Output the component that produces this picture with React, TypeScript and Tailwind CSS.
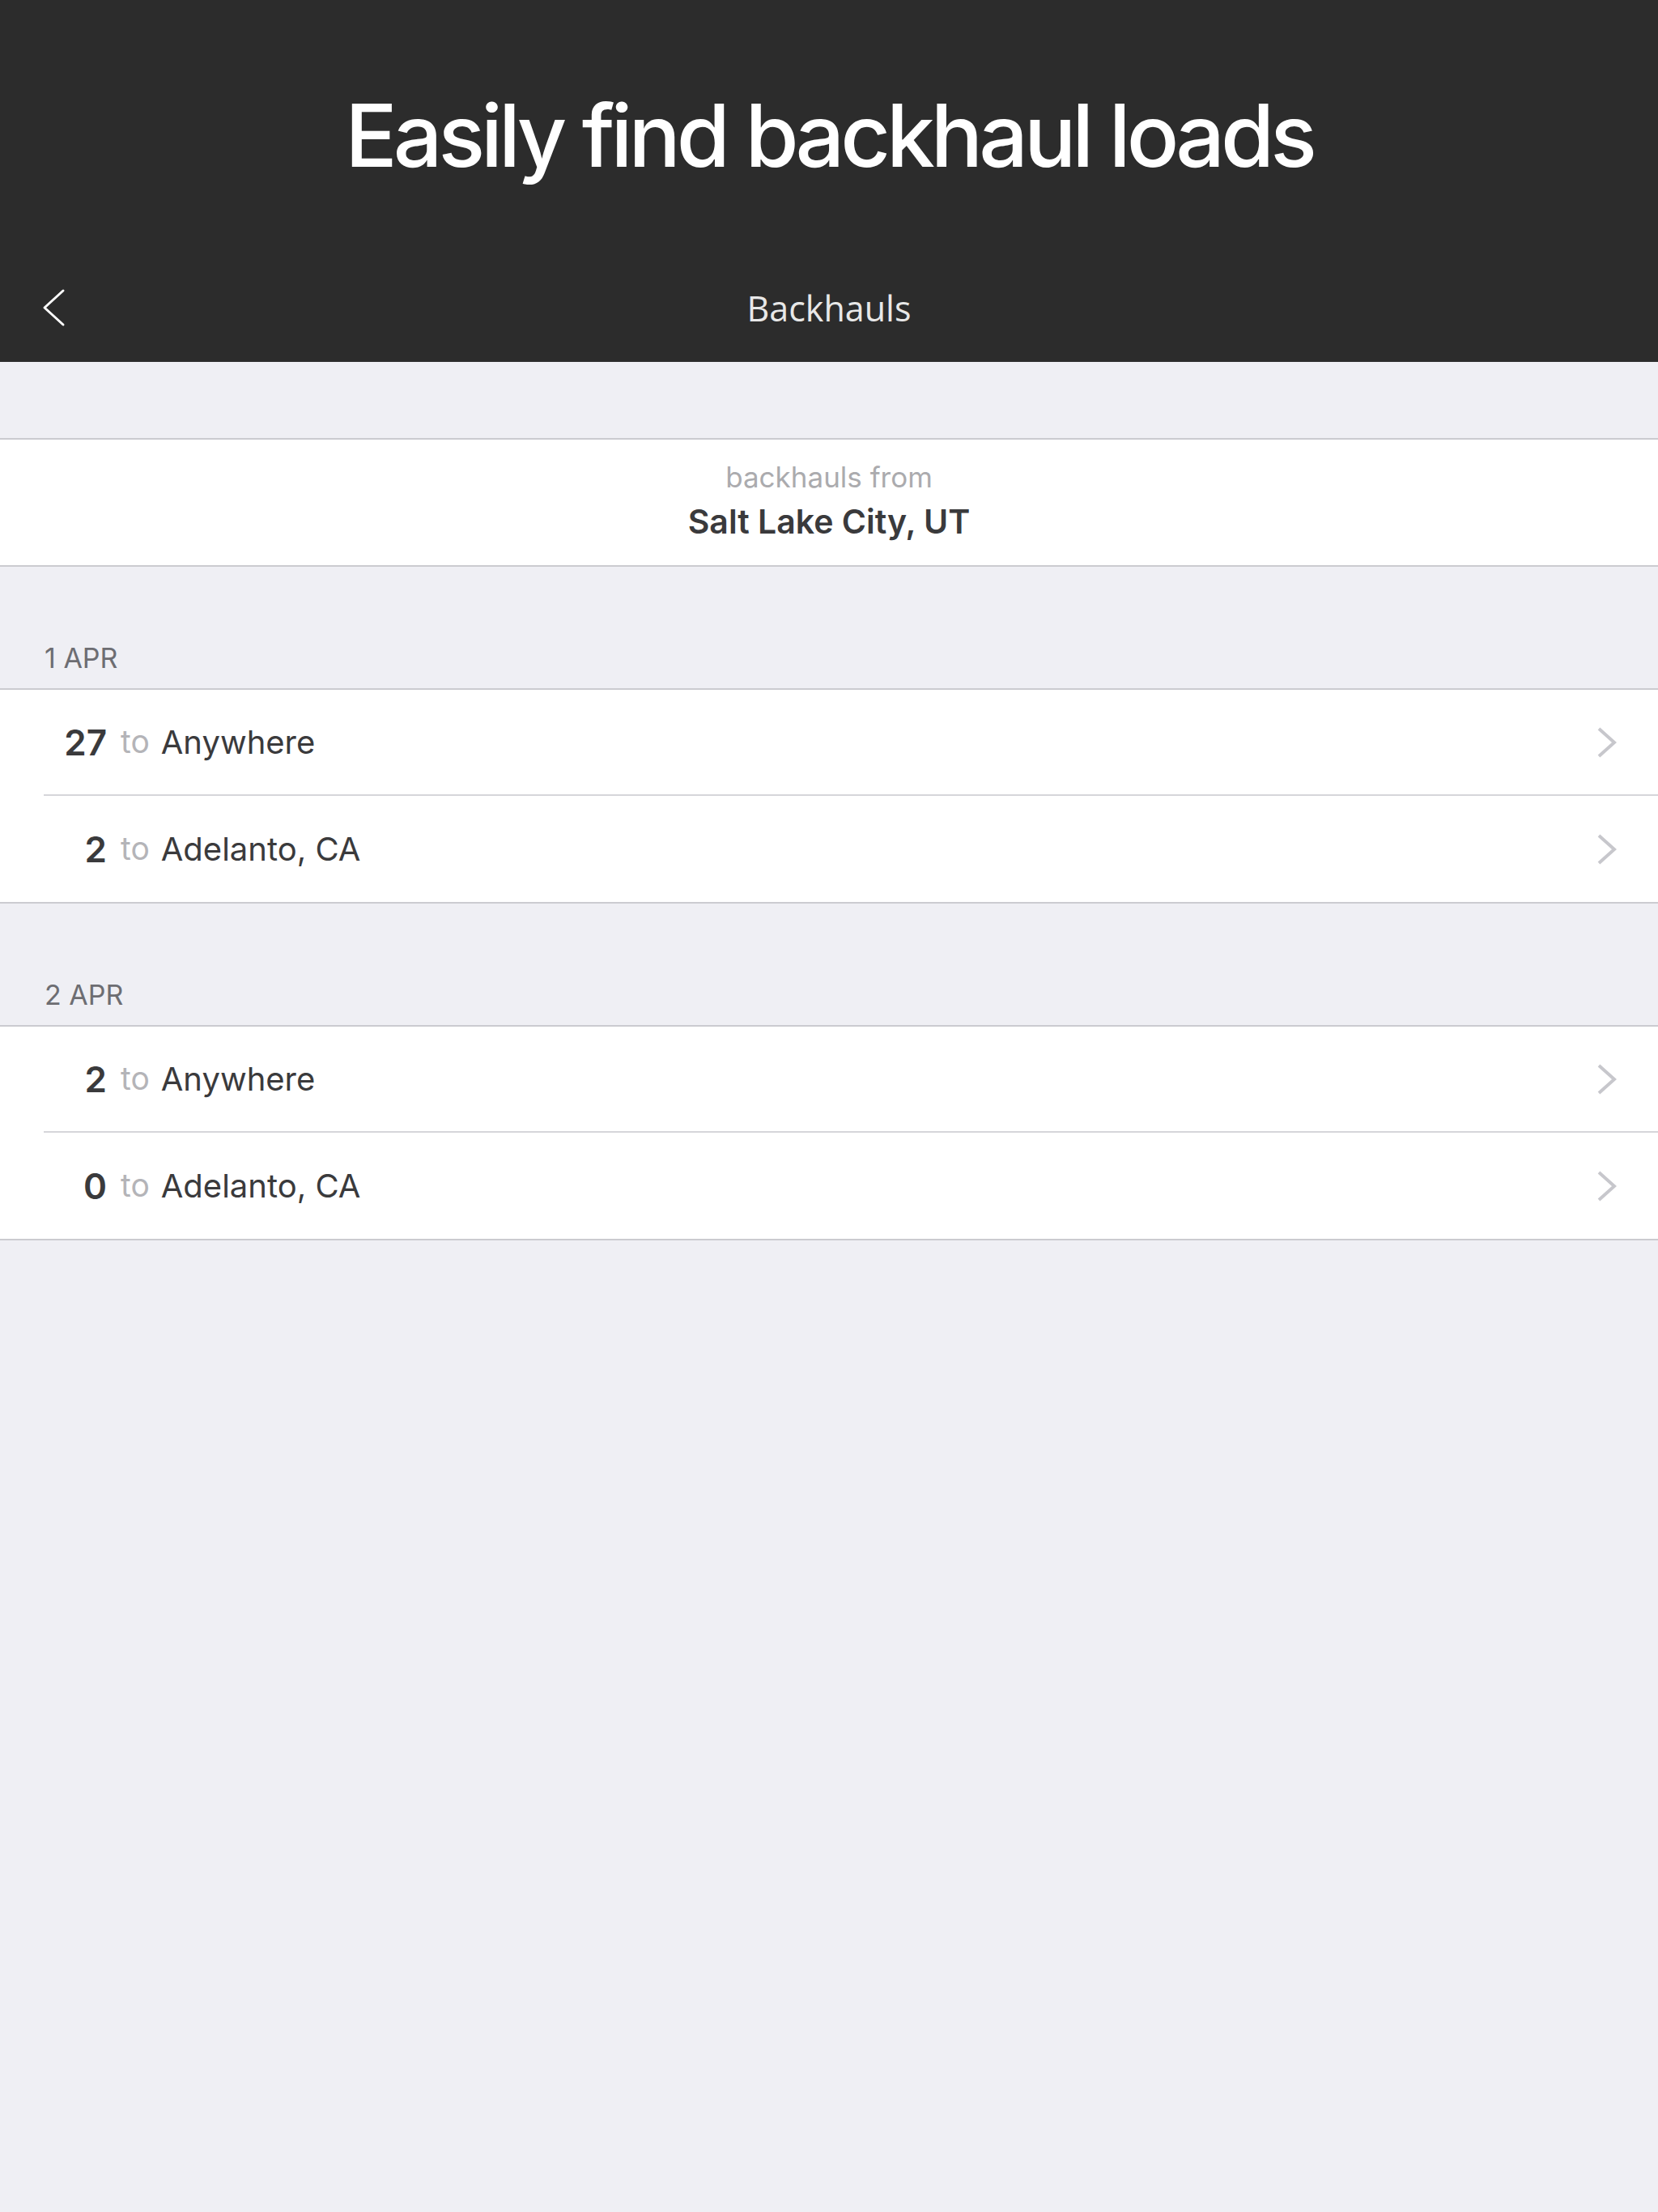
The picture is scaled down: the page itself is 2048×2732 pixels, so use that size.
import React from "react";

type Row = { count: number; dest: string };
type Section = { date: string; rows: Row[] };

const sections: Section[] = [
  {
    date: "1 APR",
    rows: [
      { count: 27, dest: "Anywhere" },
      { count: 2, dest: "Adelanto, CA" },
    ],
  },
  {
    date: "2 APR",
    rows: [
      { count: 2, dest: "Anywhere" },
      { count: 0, dest: "Adelanto, CA" },
    ],
  },
];

function ChevronRight() {
  return (
    <svg width="26" height="40" viewBox="0 0 26 40" fill="none">
      <polyline
        points="3,3 22,20 3,37"
        stroke="#c7c7cc"
        strokeWidth="4"
        strokeLinecap="butt"
        strokeLinejoin="miter"
      />
    </svg>
  );
}

function BackChevron() {
  return (
    <svg width="30" height="48" viewBox="0 0 30 48" fill="none">
      <polyline
        points="26,3 3,24 26,45"
        stroke="#ffffff"
        strokeWidth="3"
        strokeLinecap="round"
        strokeLinejoin="round"
      />
    </svg>
  );
}

function ListRow({ row, last }: { row: Row; last: boolean }) {
  return (
    <div className="flex h-[131px] items-stretch pl-[54px]">
      <div
        className={
          "flex flex-1 items-center pr-[50px] " +
          (last ? "" : "border-b-2 border-[#d6d6da]")
        }
      >
        <span className="w-[78px] text-right text-[44px] font-semibold text-[#3a3a3c]">
          {row.count}
        </span>
        <span className="ml-[17px] text-[39px] text-[#b4b4b8]">to</span>
        <span className="ml-[14px] text-[40px] text-[#3a3a3c]">{row.dest}</span>
        <span className="flex-1" />
        <ChevronRight />
      </div>
    </div>
  );
}

export default function App() {
  return (
    <div
      className="min-h-[2732px] w-[2048px] bg-[#efeff4]"
      style={{ fontFamily: "Inter, 'Liberation Sans', sans-serif" }}
    >
      <header className="flex flex-col bg-[#2c2c2c]">
        <div className="flex h-[313px] items-center justify-center pt-[22px]">
          <h1 className="text-[107px] font-medium leading-none tracking-[-0.047em] text-white">
            Easily find backhaul loads
          </h1>
        </div>
        <nav className="relative flex h-[134px] items-center justify-center">
          <div className="absolute left-[52px] top-[43px]">
            <BackChevron />
          </div>
          <span
            className="text-[43px] leading-none text-[#e8e8e8]"
            style={{ fontFamily: "'Open Sans', 'Noto Sans', sans-serif" }}
          >
            Backhauls
          </span>
        </nav>
      </header>

      <div className="h-[94px]" />

      <div className="flex h-[159px] flex-col items-center justify-center border-y-2 border-[#cbcbd0] bg-white">
        <span className="-mt-[4px] text-[35px] leading-none text-[#ababae]">backhauls from</span>
        <span className="mt-[17px] text-[41px] font-semibold leading-none text-[#3a3a3c]">
          Salt Lake City, UT
        </span>
      </div>

      {sections.map((s) => (
        <div key={s.date}>
          <div className="flex h-[150px] items-end pb-[20px] pl-[55px]">
            <span className="text-[34px] leading-none text-[#6d6d72]">{s.date}</span>
          </div>
          <div className="border-y-2 border-[#cbcbd0] bg-white">
            {s.rows.map((r, i) => (
              <ListRow key={i} row={r} last={i === s.rows.length - 1} />
            ))}
          </div>
        </div>
      ))}
    </div>
  );
}
